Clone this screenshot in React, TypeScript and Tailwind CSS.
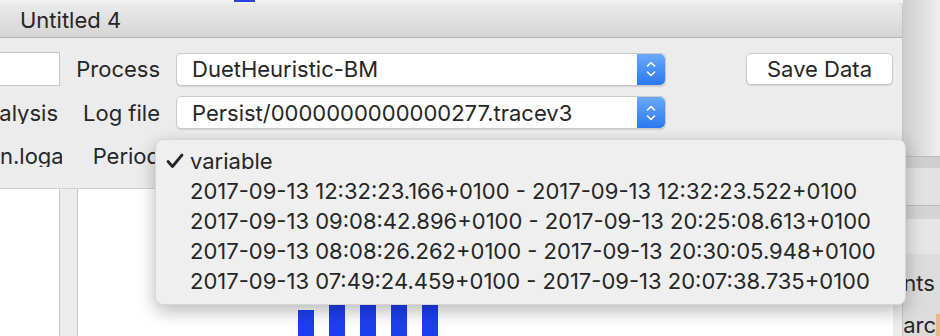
import React from 'react';

const font = { fontFamily: 'Inter, "Liberation Sans", Arial, sans-serif' };

const periods = [
  '2017-09-13 12:32:23.166+0100 - 2017-09-13 12:32:23.522+0100',
  '2017-09-13 09:08:42.896+0100 - 2017-09-13 20:25:08.613+0100',
  '2017-09-13 08:08:26.262+0100 - 2017-09-13 20:30:05.948+0100',
  '2017-09-13 07:49:24.459+0100 - 2017-09-13 20:07:38.735+0100',
];

const bars = [26, 60, 60, 60, 60];

function Stepper() {
  return (
    <div className="w-[28px] h-full rounded-r-[5px] bg-gradient-to-b from-[#69a9fb] to-[#2a78ef] flex items-center justify-center">
      <svg width="10" height="18" viewBox="0 0 10 18" fill="none" stroke="white" strokeWidth="1.6" strokeLinecap="round" strokeLinejoin="round">
        <path d="M1.5 6 L5 2.5 L8.5 6" />
        <path d="M1.5 12 L5 15.5 L8.5 12" />
      </svg>
    </div>
  );
}

function Popup({ value }: { value: string }) {
  return (
    <div className="w-[490px] h-[33px] flex bg-white rounded-[5px] border border-[#c9c9c9] shadow-[0_1px_1px_rgba(0,0,0,0.12)]">
      <div className="flex-1 flex items-center pl-[15px] text-[22px] text-[#262626] whitespace-nowrap overflow-hidden">{value}</div>
      <Stepper />
    </div>
  );
}

function Label({ text }: { text: string }) {
  return (
    <div className="w-[100px] flex justify-end text-[22px] text-[#262626] whitespace-nowrap">{text}</div>
  );
}

export default function App() {
  return (
    <div className="relative w-[940px] h-[336px] overflow-hidden flex bg-[#e2e2e2] leading-none" style={font}>
      <div className="w-[908px] flex flex-col">
        <div className="h-[3px] bg-[#f2f2f2] flex">
          <div className="ml-[234px] w-[21px] h-[2px] bg-[#2a3fd6]" />
        </div>
        <div className="flex-1 flex flex-col rounded-tr-[6px] overflow-hidden border-r border-[#c4c4c4] bg-[#ececec]">
          <div className="h-[35px] shrink-0 flex items-center pl-[20px] bg-gradient-to-b from-[#ebebeb] to-[#d5d5d5] border-b border-[#b6b6b6] text-[22px] text-[#262626]">
            Untitled 4
          </div>

          <div className="mt-[14px] h-[34px] flex items-center">
            <div className="w-[60px] h-[34px] bg-white border border-l-0 border-[#c6c6c6]" />
            <Label text="Process" />
            <div className="ml-[16px]"><Popup value="DuetHeuristic-BM" /></div>
            <div className="ml-[80px] w-[147px] h-[32px] bg-white rounded-[5px] border border-[#c9c9c9] shadow-[0_1px_1px_rgba(0,0,0,0.12)] flex items-center justify-center text-[22px] text-[#262626]">
              Save Data
            </div>
          </div>

          <div className="mt-[10px] h-[33px] flex items-center">
            <div className="w-[60px] overflow-hidden flex justify-end pr-[2px] text-[22px] text-[#262626] whitespace-nowrap">Analysis</div>
            <Label text="Log file" />
            <div className="ml-[16px]"><Popup value="Persist/0000000000000277.tracev3" /></div>
          </div>

          <div className="mt-[12px] h-[30px] flex items-center">
            <div className="w-[62px] overflow-hidden text-[22px] text-[#262626] whitespace-nowrap">n.logarithmic</div>
            <div className="w-[98px] flex justify-end text-[22px] text-[#262626] whitespace-nowrap">Period</div>
          </div>

          <div className="mt-[17px] flex-1 flex border-t border-[#d2d2d2]">
            <div className="w-[60px] bg-white border-r border-[#c8c8c8]" />
            <div className="w-[17px]" />
            <div className="w-[816px] bg-white border-l border-[#c8c8c8] flex items-end pl-[220px] gap-[15px]">
              {bars.map((h, i) => (
                <div key={i} className="w-[16px] bg-[#1d3ff0]" style={{ height: h }} />
              ))}
            </div>
          </div>
        </div>
      </div>

      <div className="flex-1 flex flex-col">
        <div className="h-[158px] bg-gradient-to-r from-[#cdcdcd] to-[#efefef]" />
        <div className="h-[1px] bg-[#b9b9b9]" />
        <div className="h-[11px] bg-[#cfcfcf]" />
        <div className="h-[37px] bg-[#e2e2e2]" />
        <div className="h-[1px] bg-[#bdbdbd]" />
        <div className="h-[14px] bg-[#d4d4d4]" />
        <div className="h-[35px] bg-[#e6e6e6]" />
        <div className="flex-1 bg-[#dcdcdc] flex flex-col text-[22px] text-[#262626]">
          <div className="mt-[18px]">nts</div>
          <div className="mt-[20px] flex">arc<span className="w-[4px] bg-[#e8b88a]" /></div>
        </div>
      </div>

      <div className="absolute left-[155px] top-[139px] w-[751px] rounded-[8px] bg-[#efefef] border border-[#d6d6d6] shadow-[0_6px_18px_rgba(0,0,0,0.28)] pt-[6px] pb-[8px] text-[22px] text-[#262626]">
        <div className="h-[30px] flex items-center">
          <div className="w-[34px] flex justify-center pl-[3px]">
            <svg width="18" height="16" viewBox="0 0 18 16" fill="none" stroke="#262626" strokeWidth="2.8" strokeLinecap="round" strokeLinejoin="round">
              <path d="M2 8.5 L6.5 13.5 L16 2" />
            </svg>
          </div>
          <span>variable</span>
        </div>
        {periods.map((p) => (
          <div key={p} className="h-[30px] flex items-center pl-[34px] whitespace-nowrap">{p}</div>
        ))}
      </div>
    </div>
  );
}
